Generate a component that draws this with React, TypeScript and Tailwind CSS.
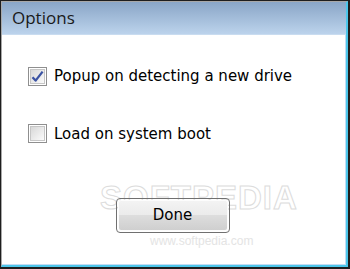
import { useState } from 'react';

function Check({ checked }: { checked: boolean }) {
  return (
    <div className="w-[19px] h-[19px] border border-[#8f8f8f] bg-white p-px shrink-0">
      <div className="w-full h-full border border-[#c6c6c6] bg-gradient-to-br from-[#d8d8d8] to-[#fbfbfb] flex items-center justify-center">
        {checked && (
          <svg width="13" height="13" viewBox="0 0 13 13">
            <path d="M1.5 7.2 L4.6 10.6 L11.6 1.6" fill="none" stroke="#3b53a3" strokeWidth="2.3" strokeLinejoin="round" />
          </svg>
        )}
      </div>
    </div>
  );
}

export default function App() {
  const [popup, setPopup] = useState(true);
  const [boot, setBoot] = useState(false);

  return (
    <div className="w-[350px] h-[269px] bg-[#1e1e1e] pl-px pt-px pr-[2px] pb-[2px]">
      <div className="h-full border-l border-t border-[#a8a8a8] border-r-2 border-b-2 border-r-[#4cc6ea] border-b-[#4cc6ea] flex flex-col">
        <div className="h-[33px] shrink-0 bg-gradient-to-b from-[#8aa6c7] to-[#bcd3ec] border-b border-[#c9dcf0] pl-[10px] flex items-center text-[17px] text-[#1a1a1a] [font-family:'Open_Sans',sans-serif]">
          Options
        </div>
        <div className="relative flex-1 bg-white border-r border-b border-[#c3dcf3] [font-family:'DejaVu_Sans',sans-serif] text-[15px] text-black">
          <div className="absolute left-[98px] top-[138px] text-[33px] font-bold tracking-[1px] text-transparent [-webkit-text-stroke:1px_#dcdcdc] [font-family:'Liberation_Sans',sans-serif] select-none">
            SOFTPEDIA
          </div>
          <div className="absolute left-[148px] top-[200px] text-[12px] leading-none text-[#e4e4e4] [font-family:'Liberation_Sans',sans-serif] select-none">
            www.softpedia.com
          </div>

          <div className="relative pt-[30px] pl-[26px] flex flex-col gap-[35px]">
            <label className="flex items-center gap-[7px]" onClick={() => setPopup(!popup)}>
              <Check checked={popup} />
              <span>Popup on detecting a new drive</span>
            </label>
            <label className="flex items-center gap-[7px]" onClick={() => setBoot(!boot)}>
              <Check checked={boot} />
              <span>Load on system boot</span>
            </label>
          </div>

          <div className="relative flex justify-center pt-[53px] pr-[2px]">
            <button className="w-[114px] h-[35px] rounded-[4px] border border-[#707070] p-px">
              <div className="h-full rounded-[3px] border border-[#fcfcfc] bg-[linear-gradient(to_bottom,#f3f3f3_0%,#ebebeb_48%,#dddddd_50%,#cfcfcf_100%)] flex items-center justify-center text-[15px] text-black">
                Done
              </div>
            </button>
          </div>
        </div>
      </div>
    </div>
  );
}
